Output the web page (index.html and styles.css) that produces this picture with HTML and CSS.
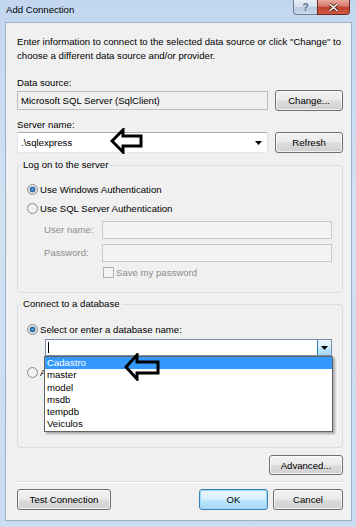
FILE: index.html
```html
<!DOCTYPE html>
<html lang="en">
<head>
    <meta charset="UTF-8">
    <title>Add Connection</title>
    <link rel="stylesheet" href="styles.css">
</head>
<body>
    <div class="window">
        <div class="titlebar">
            <span class="title">Add Connection</span>
            <div class="caption">
                <span class="cap-btn help">?</span>
                <span class="cap-btn close">
                    <svg width="11" height="9" viewBox="0 0 11 9"><path d="M1.5 1 L9.5 8 M9.5 1 L1.5 8" stroke="#4a1a14" stroke-width="3"/><path d="M1.5 1 L9.5 8 M9.5 1 L1.5 8" stroke="#fff" stroke-width="1.6"/></svg>
                </span>
            </div>
        </div>

        <div class="client">
            <p class="intro">Enter information to connect to the selected data source or click "Change" to<br>choose a different data source and/or provider.</p>

            <div class="label first">Data source:</div>
            <div class="row">
                <div class="field readonly">Microsoft SQL Server (SqlClient)</div>
                <button class="btn side">Change...</button>
            </div>

            <div class="label">Server name:</div>
            <div class="row">
                <div class="field combo">
                    <span>.\sqlexpress</span>
                    <svg class="combo-arrow" width="7" height="4" viewBox="0 0 7 4"><path d="M0 0 H7 L3.5 4 Z" fill="#000"/></svg>
                    <svg class="pointer one" width="34" height="26" viewBox="0 0 34 26"><path d="M2 13 L13 2 L13 8 L31 8 L31 18 L13 18 L13 24 Z" fill="none" stroke="#000" stroke-width="3"/></svg>
                </div>
                <button class="btn side">Refresh</button>
            </div>

            <div class="group logon">
                <div class="group-title">Log on to the server</div>
                <div class="radio-row first"><span class="radio on"></span>Use Windows Authentication</div>
                <div class="radio-row"><span class="radio"></span>Use SQL Server Authentication</div>
                <div class="cred-row"><span class="cred-label">User name:</span><span class="field disabled"></span></div>
                <div class="cred-row"><span class="cred-label">Password:</span><span class="field disabled"></span></div>
                <div class="check-row"><span class="checkbox"></span>Save my password</div>
            </div>

            <div class="group database">
                <div class="group-title">Connect to a database</div>
                <div class="radio-row first"><span class="radio on"></span>Select or enter a database name:</div>
                <div class="db-combo">
                    <span class="caret"></span>
                    <span class="db-drop">
                        <svg width="7" height="4" viewBox="0 0 7 4"><path d="M0 0 H7 L3.5 4 Z" fill="#000"/></svg>
                    </span>
                    <ul class="db-list">
                        <li class="selected">Cadastro</li>
                        <li>master</li>
                        <li>model</li>
                        <li>msdb</li>
                        <li>tempdb</li>
                        <li>Veiculos</li>
                    </ul>
                    <svg class="pointer two" width="37" height="28" viewBox="0 0 37 28"><path d="M2 14 L13 2 L13 9 L34 9 L34 20 L13 20 L13 26 Z" fill="none" stroke="#000" stroke-width="3"/></svg>
                </div>
                <div class="radio-row attach"><span class="radio"></span><span class="attach-text">Attach a database file:</span></div>
            </div>

            <div class="advanced-row">
                <button class="btn advanced">Advanced...</button>
            </div>

            <div class="separator"></div>

            <div class="footer">
                <button class="btn test">Test Connection</button>
                <div class="footer-right">
                    <button class="btn ok">OK</button>
                    <button class="btn cancel">Cancel</button>
                </div>
            </div>
        </div>
    </div>
</body>
</html>
```

FILE: styles.css
```css
body {
    margin: 0;
    font-family: "Segoe UI", "Liberation Sans", Arial, sans-serif;
    font-size: 9.6px;
    color: #000;
    background: #fff;
}

.window {
    width: 356px;
    height: 527px;
    box-sizing: border-box;
    padding: 0 4px 6px 5px;
    display: flex;
    flex-direction: column;
    background: linear-gradient(180deg, #c2d7ef 0%, #d3e2f3 40%, #c9dcf1 100%);
}

.titlebar {
    height: 22px;
    flex: none;
    display: flex;
    justify-content: space-between;
    align-items: flex-start;
}

.title {
    margin: 4px 0 0 1px;
    line-height: 12px;
}

.caption {
    display: flex;
    margin-right: 2px;
}

.cap-btn {
    height: 15px;
    display: flex;
    align-items: center;
    justify-content: center;
    box-sizing: border-box;
    border: 1px solid #6c7f98;
    border-top: none;
}

.help {
    width: 24px;
    border-radius: 0 0 0 4px;
    border-right: none;
    background: linear-gradient(180deg, #e6eef8 0%, #d2deec 50%, #b7c9de 51%, #c9d8ea 100%);
    color: #5b6c82;
    font-size: 10px;
    font-weight: bold;
}

.close {
    width: 33px;
    border-radius: 0 0 4px 0;
    border-color: #6b2a22;
    background: linear-gradient(180deg, #e9a99c 0%, #d4786a 45%, #c0412f 50%, #d05a44 100%);
}

.client {
    flex: 1;
    position: relative;
    background: #f0f0f0;
    border: 1px solid #9fb1c7;
    padding: 12px 8px 0 11px;
}

.intro {
    margin: 0;
    line-height: 14px;
}

.label {
    line-height: 14px;
    margin-top: 7px;
}

.label.first {
    margin-top: 13px;
}

.row {
    display: flex;
    align-items: center;
    gap: 7px;
    height: 21px;
}

.field {
    box-sizing: border-box;
    background: #fff;
    border: 1px solid #abadb3;
    border-left-color: #e2e3ea;
    border-right-color: #e2e3ea;
    border-bottom-color: #e3e9ef;
    display: flex;
    align-items: center;
}

.row .field {
    flex: 1;
    padding-left: 3px;
}

.readonly {
    height: 19px;
    background: #f0f0f0;
    border-color: #bcbcbc;
}

.combo {
    position: relative;
    height: 21px;
    justify-content: space-between;
    padding-right: 5px;
}

.combo-arrow {
    margin-top: 1px;
}

.pointer {
    position: absolute;
    z-index: 2;
}

.pointer.one {
    left: 92px;
    top: -5px;
}

.pointer.two {
    left: 78px;
    top: 13px;
}

.btn {
    font-family: inherit;
    font-size: inherit;
    color: #000;
    box-sizing: border-box;
    padding: 0;
    border: 1px solid #707070;
    border-radius: 3px;
    background: linear-gradient(180deg, #f2f2f2 0%, #ebebeb 48%, #dddddd 52%, #cfcfcf 100%);
    box-shadow: inset 0 0 0 1px rgba(255, 255, 255, 0.7);
}

.side {
    width: 68px;
    height: 21px;
}

.group {
    border: 1px solid #d5dfe5;
    border-radius: 3px;
    padding: 0 10px 0 9px;
}

.group-title {
    width: max-content;
    margin: -8px 0 0 -6px;
    padding: 0 2px;
    line-height: 14px;
    background: #f0f0f0;
}

.logon {
    margin-top: 12px;
    padding-bottom: 12px;
}

.database {
    margin-top: 11px;
    padding-bottom: 65px;
}

.radio-row {
    height: 19px;
    display: flex;
    align-items: center;
    gap: 2px;
}

.logon .radio-row.first {
    margin-top: 8px;
}

.database .radio-row.first {
    margin-top: 9px;
}

.radio-row.attach {
    margin-top: 7px;
}

/* the dropdown list covers this label, only its first letter shows */
.attach-text {
    width: 5px;
    overflow: hidden;
    white-space: nowrap;
}

.radio {
    width: 11px;
    height: 11px;
    flex: none;
    box-sizing: border-box;
    border-radius: 50%;
    border: 1px solid #8e8f8f;
    background: radial-gradient(circle, #e8e8e8 0%, #f6f6f6 40%, #d6d6d6 100%);
}

.radio.on {
    background: radial-gradient(circle, #6ab0e6 0%, #1b5d9c 2.5px, #dcdcdc 3.2px, #f4f4f4 100%);
}

.cred-row {
    height: 23px;
    display: flex;
    align-items: center;
    margin-left: 17px;
}

.cred-label {
    width: 58px;
    color: #8d8d8d;
}

.cred-row .field {
    width: 230px;
    height: 18px;
    background: #f4f4f4;
    border-color: #c6c9cc;
}

.check-row {
    height: 16px;
    display: flex;
    align-items: center;
    gap: 2px;
    margin-left: 76px;
    color: #8d8d8d;
}

.checkbox {
    width: 11px;
    height: 11px;
    box-sizing: border-box;
    border: 1px solid #b1b1b1;
    background: #f4f4f4;
}

.db-combo {
    position: relative;
    width: 287px;
    height: 17px;
    margin-left: 18px;
    box-sizing: border-box;
    background: #fff;
    border: 1px solid #7a8da5;
    display: flex;
    align-items: center;
    justify-content: space-between;
}

.caret {
    width: 1px;
    height: 11px;
    margin-left: 2px;
    background: #000;
}

.db-drop {
    width: 14px;
    height: 15px;
    box-sizing: border-box;
    border-left: 1px solid #3c7fb1;
    background: linear-gradient(180deg, #eaf6fd 0%, #d9f0fc 48%, #bee6fd 52%, #a7d9f5 100%);
    display: flex;
    align-items: center;
    justify-content: center;
}

.db-list {
    position: absolute;
    z-index: 1;
    left: -2px;
    top: 16px;
    width: 289px;
    height: 76px;
    box-sizing: border-box;
    margin: 0;
    padding: 0;
    list-style: none;
    background: #fff;
    border: 1px solid #646464;
    box-shadow: 2px 2px 2px rgba(0, 0, 0, 0.3);
}

.db-list li {
    height: 12.3px;
    line-height: 12.3px;
    padding-left: 2px;
}

.db-list li.selected {
    background: #3399ff;
    color: #fff;
}

.advanced-row {
    display: flex;
    justify-content: flex-end;
    margin-top: 7px;
}

.advanced {
    width: 74px;
    height: 20px;
}

.separator {
    height: 1px;
    margin-top: 6px;
    background: #d5dfe5;
    border-bottom: 1px solid #fff;
}

.footer {
    display: flex;
    justify-content: space-between;
    margin-top: 6px;
}

.footer-right {
    display: flex;
    gap: 5px;
}

.footer .btn {
    height: 21px;
}

.test {
    width: 94px;
}

.ok {
    width: 69px;
    border-color: #3c7fb1;
    background: linear-gradient(180deg, #eaf6fd 0%, #d9f0fc 48%, #bee6fd 52%, #a7d9f5 100%);
    box-shadow: inset 0 0 0 1px #96d9f9;
}

.cancel {
    width: 70px;
}
```
